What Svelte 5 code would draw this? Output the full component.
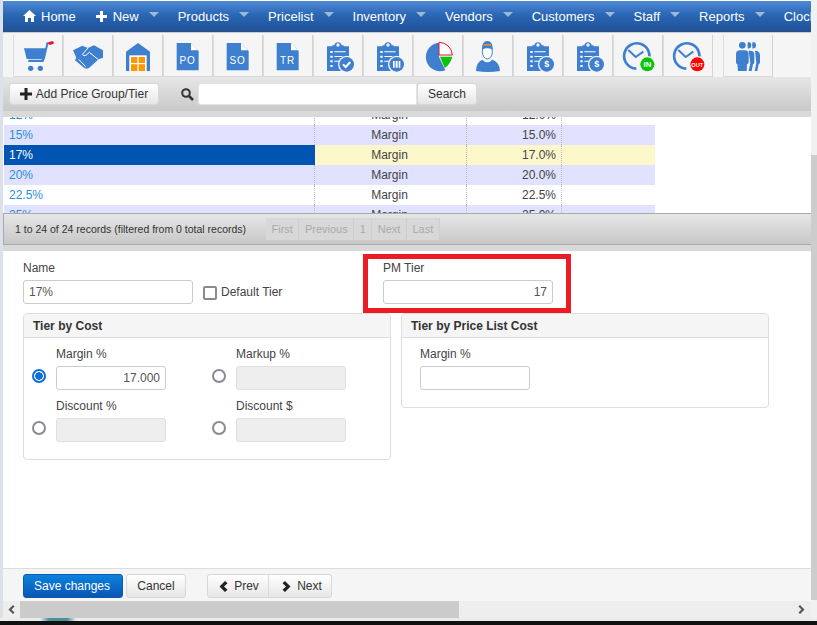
<script lang="ts">
	const nav = [
		{ label: 'Home', icon: 'home' },
		{ label: 'New', icon: 'plus', caret: true },
		{ label: 'Products', caret: true },
		{ label: 'Pricelist', caret: true },
		{ label: 'Inventory', caret: true },
		{ label: 'Vendors', caret: true },
		{ label: 'Customers', caret: true },
		{ label: 'Staff', caret: true },
		{ label: 'Reports', caret: true },
		{ label: 'Clock' }
	];

	const rows = [
		{ name: '12%', value: '12.0%' },
		{ name: '15%', value: '15.0%' },
		{ name: '17%', value: '17.0%', selected: true },
		{ name: '20%', value: '20.0%' },
		{ name: '22.5%', value: '22.5%' },
		{ name: '25%', value: '25.0%' }
	];

	const pages = ['First', 'Previous', '1', 'Next', 'Last'];
</script>

{#snippet clipboard()}
	<path class="b" d="M42 34h16v-3h6q2-9 11-9t11 9h6v3h16v74h-66z" />
	<circle cx="75" cy="30" r="5" fill="#f5f5f5" />
	<path class="w" d="M52 48h7v6h-7zM64 49h34v3h-34zM52 62h7v6h-7zM64 63h24v3h-24zM52 76h7v6h-7zM64 77h14v3h-14zM52 90h7v6h-7z" />
	<circle cx="101" cy="88" r="26" fill="#f5f5f5" />
	<circle class="b" cx="101" cy="88" r="22" />
{/snippet}

{#snippet doc(code)}
	<path class="b" d="M41 24h42l24 24v58h-66z" />
	<path fill="#fff" d="M84 25l21 21h-21z" />
	<text class="doc-text" x="74" y="88" text-anchor="middle">{code}</text>
{/snippet}

{#snippet clock(badge, code)}
	<path d="M103 84A38 38 0 1 0 70 101" fill="none" stroke="#3f7fcf" stroke-width="8" />
	<path d="M46 45L68 66L91 50" fill="none" stroke="#3f7fcf" stroke-width="6" />
	<circle cx="103" cy="88" r="25" fill="#f5f5f5" />
	<circle cx="103" cy="88" r="21" fill={badge} />
	<text class="badge-text" class:narrow={code === 'OUT'} x="103" y="96" text-anchor="middle">{code}</text>
{/snippet}

<div class="window">
	<div class="frame">
		<div class="left-strip"></div>
		<div class="main">
			<nav class="navbar">
				{#each nav as item}
					<div class="nav-item">
						{#if item.icon === 'home'}
							<svg class="nav-icon" width="13" height="12" viewBox="0 0 13 12"><path fill="#fff" d="M6.5 0L13 6h-2v6H8V8H5v4H2V6H0z" /></svg>
						{:else if item.icon === 'plus'}
							<svg class="nav-icon" width="11" height="11" viewBox="0 0 11 11"><path fill="#fff" d="M4 0h3v4h4v3H7v4H4V7H0V4h4z" /></svg>
						{/if}
						<span>{item.label}</span>
						{#if item.caret}<i class="caret"></i>{/if}
					</div>
				{/each}
			</nav>

			<div class="toolbar">
				<div class="tool">
					<svg viewBox="0 0 150 126">
						<path class="b" d="M33 40H97L101 22H107L96 70L91 81H46V74H86L87 72H41z" />
						<ellipse cx="114" cy="24" rx="9" ry="5" transform="rotate(-15 114 24)" fill="#e8112d" />
						<circle class="b" cx="53" cy="100" r="8" />
						<circle class="b" cx="82" cy="100" r="8" />
					</svg>
				</div>
				<div class="tool">
					<svg viewBox="0 0 150 126">
						<path class="b" d="M30 46L58 32L75 39L93 31L120 46V68L108 72L78 99Q70 103 63 98L36 76L40 68z" />
						<path class="wl hair" d="M75 39L58 58Q62 66 70 60L79 52L106 74M47 73L68 95" />
					</svg>
				</div>
				<div class="tool">
					<svg viewBox="0 0 150 126">
						<path class="b" d="M39 50L75 24L111 50V108H39z" />
						<rect x="49" y="61" width="52" height="47" fill="#fff" />
						<path fill="#ff9800" d="M54 66h19v18h-19zM77 66h19v18h-19zM54 88h19v20h-19zM77 88h19v20h-19z" />
					</svg>
				</div>
				<div class="tool"><svg viewBox="0 0 150 126">{@render doc('PO')}</svg></div>
				<div class="tool"><svg viewBox="0 0 150 126">{@render doc('SO')}</svg></div>
				<div class="tool"><svg viewBox="0 0 150 126">{@render doc('TR')}</svg></div>
				<div class="tool">
					<svg viewBox="0 0 150 126">
						{@render clipboard()}
						<path class="wl thick" d="M90 88l8 8l14-15" />
					</svg>
				</div>
				<div class="tool">
					<svg viewBox="0 0 150 126">
						{@render clipboard()}
						<path class="w" d="M90 78h5v20h-5zM98 78h6v20h-6zM107 78h5v20h-5z" />
					</svg>
				</div>
				<div class="tool">
					<svg viewBox="0 0 150 126">
						<path class="b" d="M78 66V23A43 43 0 1 0 97 106z" />
						<path d="M78 22V60H118A40 40 0 0 0 78 22z" fill="#fff" stroke="#e8112d" stroke-width="3" />
						<path d="M81 65H118Q112 88 95 99z" fill="#0ac40a" />
					</svg>
				</div>
				<div class="tool">
					<svg viewBox="0 0 150 126">
						<path class="b" d="M39 108Q39 83 58 74Q73 90 88 74Q111 83 111 108Q75 114 39 108z" />
						<ellipse cx="73" cy="50" rx="15" ry="22" fill="#fff" stroke="#3f7fcf" stroke-width="3" />
						<path class="b" d="M57 44Q56 18 73 18Q90 18 89 44Q73 36 57 44z" />
						<path fill="#f08a24" d="M62 27h22v5h-22z" />
					</svg>
				</div>
				<div class="tool">
					<svg viewBox="0 0 150 126">
						{@render clipboard()}
						<text class="dollar" x="101" y="97" text-anchor="middle">$</text>
					</svg>
				</div>
				<div class="tool">
					<svg viewBox="0 0 150 126">
						{@render clipboard()}
						<text class="dollar" x="101" y="97" text-anchor="middle">$</text>
					</svg>
				</div>
				<div class="tool"><svg viewBox="0 0 150 126">{@render clock('#0ac40a', 'IN')}</svg></div>
				<div class="tool"><svg viewBox="0 0 150 126">{@render clock('#f00', 'OUT')}</svg></div>
				<div class="tool tool-apart">
					<svg viewBox="0 0 150 126">
						<circle class="b" cx="58" cy="31" r="10" />
						<path class="b" d="M75 21a10 10 0 0 1 0 20q-4-10 0-20zM89 21a10 10 0 0 1 0 20q-4-10 0-20z" />
						<path class="b" d="M39 58q0-12 12-12h14q12 0 12 12v24q0 5-5 6l-1 20h-26l-2-20q-4-1-4-6z" />
						<path class="b" d="M77 47h5q12 0 12 12v22q0 5-4 7l-4 20h-9l5-24z" />
						<path class="b" d="M96 47h1q12 0 14 12v22q0 5-4 7l-4 20h-8l5-24z" />
					</svg>
				</div>
			</div>

			<div class="searchbar">
				<button class="btn add-btn">
					<svg width="12" height="12" viewBox="0 0 12 12"><path fill="#222" d="M4.5 0h3v4.5H12v3H7.500V12h-3V7.500H0v-3h4.500z" /></svg>
					Add Price Group/Tier
				</button>
				<svg class="search-icon" width="13" height="13" viewBox="0 0 13 13">
					<circle cx="5" cy="5" r="3.800" fill="none" stroke="#333" stroke-width="2" />
					<path d="M8 8l4 4" stroke="#333" stroke-width="2.500" />
				</svg>
				<input class="search-input" />
				<button class="btn search-btn">Search</button>
			</div>
			<div class="band"></div>

			<div class="table-wrap">
				<div class="table">
					{#each rows as row, i}
						<div class="row" class:odd={i % 2 === 1} class:selected={row.selected}>
							<div class="cell name">{row.name}</div>
							<div class="cell type">Margin</div>
							<div class="cell value">{row.value}</div>
							<div class="cell last"></div>
						</div>
					{/each}
				</div>
			</div>

			<div class="table-foot">
				<span class="records">1 to 24 of 24 records (filtered from 0 total records)</span>
				<div class="pager">
					{#each pages as page}
						<span class="page">{page}</span>
					{/each}
				</div>
			</div>
			<div class="band"></div>

			<div class="form">
				<div class="form-top">
					<div class="field name-field">
						<label for="tier-name">Name</label>
						<input id="tier-name" value="17%" />
					</div>
					<div class="default-tier">
						<span class="checkbox"></span>
						<span>Default Tier</span>
					</div>
					<div class="field pm-box">
						<label for="pm-tier">PM Tier</label>
						<input id="pm-tier" class="num" value="17" />
					</div>
				</div>

				<div class="panels">
					<section class="panel">
						<h3>Tier by Cost</h3>
						<div class="options">
							<div class="option">
								<span class="opt-label">Margin %</span>
								<span class="radio on"></span>
								<input class="num" value="17.000" />
							</div>
							<div class="option">
								<span class="opt-label">Markup %</span>
								<span class="radio"></span>
								<input disabled />
							</div>
							<div class="option">
								<span class="opt-label">Discount %</span>
								<span class="radio"></span>
								<input disabled />
							</div>
							<div class="option">
								<span class="opt-label">Discount $</span>
								<span class="radio"></span>
								<input disabled />
							</div>
						</div>
					</section>
					<section class="panel">
						<h3>Tier by Price List Cost</h3>
						<div class="single">
							<span class="opt-label">Margin %</span>
							<input />
						</div>
					</section>
				</div>
			</div>

			<div class="actions">
				<button class="btn primary">Save changes</button>
				<button class="btn cancel">Cancel</button>
				<div class="btn-group">
					<button class="btn prev">
						<svg width="9" height="11" viewBox="0 0 9 11"><path fill="#222" d="M6 0L8.500 2.200L5 5.500L8.500 8.800L6 11L0.500 5.500z" /></svg>
						Prev
					</button>
					<button class="btn next">
						<svg width="9" height="11" viewBox="0 0 9 11"><path fill="#222" d="M3 0L0.500 2.200L4 5.500L0.500 8.800L3 11L8.500 5.500z" /></svg>
						Next
					</button>
				</div>
			</div>

			<div class="hscroll">
				<svg width="7" height="9" viewBox="0 0 7 9"><path fill="#555" d="M5 0L6.500 1.500L3.500 4.500L6.500 7.500L5 9L0.500 4.500z" /></svg>
				<div class="thumb"></div>
				<svg class="right-arrow" width="7" height="9" viewBox="0 0 7 9"><path fill="#555" d="M2 0L0.500 1.500L3.500 4.500L0.500 7.500L2 9L6.500 4.500z" /></svg>
			</div>
		</div>
		<div class="vscroll"><div class="vthumb"></div></div>
	</div>
	<div class="edge">
		<div class="smudge"></div>
		<div class="black"></div>
	</div>
</div>

<style>
	:global(body) {
		margin: 0;
		background: #fff;
	}

	.window {
		width: 817px;
		height: 625px;
		overflow: hidden;
		display: flex;
		flex-direction: column;
		font-family: 'Liberation Sans', Arial, sans-serif;
		font-size: 12px;
		color: #444;
	}

	.frame {
		display: flex;
		height: 618px;
	}

	.left-strip {
		width: 3px;
		background: #dbe0ea;
	}

	.main {
		width: 808px;
		display: flex;
		flex-direction: column;
		background: #fff;
	}

	.vscroll {
		width: 6px;
		background: #f1f1f1;
		padding-top: 155px;
	}

	.vthumb {
		height: 445px;
		background: #cdcdcd;
	}

	.navbar {
		display: flex;
		height: 30px;
		margin-top: 1px;
		padding-left: 20px;
		align-items: center;
		overflow: hidden;
		white-space: nowrap;
		background: linear-gradient(#4f8ad6, #2a67b5 45%, #1f5299);
		border-bottom: 1px solid #2c4f80;
		color: #fff;
	}

	.nav-item {
		display: flex;
		align-items: center;
		margin-right: 19px;
		flex-shrink: 0;
		font-size: 13px;
	}

	.nav-item:first-child {
		margin-right: 20px;
	}

	.nav-icon {
		margin: 0 5px 0 0;
	}

	.nav-item:nth-child(2) .nav-icon {
		margin-right: 6px;
	}

	.caret {
		width: 0;
		height: 0;
		margin: -3px 0 0 10px;
		border-left: 5px solid transparent;
		border-right: 5px solid transparent;
		border-top: 5px solid #9db7da;
	}

	.toolbar {
		display: flex;
		height: 45px;
		box-sizing: border-box;
		padding: 2px 0 1px 10px;
		border-top: 1px solid #c6ccd4;
		background: #f5f5f5;
	}

	.tool {
		width: 50px;
		height: 42px;
		box-sizing: border-box;
		border-left: 1px solid #dcdcdc;
		border-right: 1px solid #d4d4d4;
		border-bottom: 1px solid #d8d8d8;
		margin-right: 0;
		position: relative;
	}

	.tool svg {
		display: block;
		width: 50px;
		height: 42px;
		margin-left: -1px;
	}

	.tool-apart {
		margin-left: 10px;
	}

	.b {
		fill: #3f7fcf;
	}

	.w {
		fill: #fff;
	}

	.wl {
		fill: none;
		stroke: #fff;
		stroke-width: 4;
	}

	.hair {
		stroke-width: 3;
	}

	.thick {
		stroke-width: 6;
	}

	.doc-text {
		fill: #fff;
		font-size: 30px;
		letter-spacing: 3px;
	}

	.badge-text {
		fill: #fff;
		font-size: 23px;
		font-weight: bold;
	}

	.badge-text.narrow {
		font-size: 17px;
		y: 94px;
	}

	.dollar {
		fill: #fff;
		font-size: 27px;
		font-weight: bold;
	}

	.searchbar {
		display: flex;
		align-items: center;
		height: 34px;
		padding-left: 6px;
		background: linear-gradient(#e6e6e6, #c9c9c9);
	}

	.band {
		height: 6px;
		background: #d9d9d9;
	}

	.btn {
		height: 24px;
		box-sizing: border-box;
		padding: 0;
		border: 1px solid #d8d8d8;
		border-radius: 3px;
		background: linear-gradient(#fff, #e6e6e6);
		font-family: inherit;
		font-size: 12px;
		color: #333;
	}

	.add-btn {
		width: 150px;
		height: 22px;
		display: flex;
		align-items: center;
		justify-content: center;
		gap: 4px;
	}

	.search-icon {
		margin-left: 22px;
	}

	.search-input {
		width: 219px;
		height: 22px;
		margin-left: 4px;
		border-color: #e4e4e4;
		border-radius: 3px 0 0 3px;
	}

	.search-btn {
		width: 60px;
		height: 22px;
	}

	.table-wrap {
		height: 96px;
		overflow: hidden;
		padding-left: 1px;
	}

	.table {
		margin-top: -12px;
		width: 651px;
	}

	.row {
		display: grid;
		grid-template-columns: 311px 152px 95px 93px;
		height: 20px;
		line-height: 20px;
		background: #fff;
	}

	.row.odd {
		background: #e0e2ff;
	}

	.row.selected {
		background: #fdf8cb;
	}

	.cell {
		box-sizing: border-box;
		border-right: 1px dotted #bbb;
	}

	.cell.last {
		border-right: 0;
	}

	.name {
		padding-left: 5px;
		color: #2a8fd6;
	}

	.selected .name {
		background: #0055b3;
		color: #fff;
		border-right: 0;
	}

	.type {
		text-align: center;
		padding-right: 2px;
	}

	.value {
		text-align: right;
		padding-right: 5px;
	}

	.table-foot {
		display: flex;
		align-items: center;
		height: 32px;
		box-sizing: border-box;
		padding-left: 11px;
		background: linear-gradient(#e6e6e6, #c8c8c8);
		border: 1px solid #aaa;
		border-right: 0;
	}

	.records {
		width: 251px;
		flex-shrink: 0;
		font-size: 10.500px;
		white-space: nowrap;
		color: #333;
	}

	.pager {
		display: flex;
	}

	.page {
		height: 22px;
		line-height: 22px;
		padding: 0 5.500px;
		background: #d8d8d8;
		border-right: 1px solid #cfcfcf;
		color: #aaa;
		font-size: 11px;
	}

	.form {
		flex: 1;
		padding: 3px 0 0 20px;
	}

	.form-top {
		display: flex;
		height: 59px;
	}

	label,
	.opt-label {
		display: block;
		height: 14px;
		line-height: 14px;
		margin-bottom: 5px;
	}

	input {
		display: block;
		box-sizing: border-box;
		width: 100%;
		height: 24px;
		padding: 0 5px;
		border: 1px solid #ccc;
		border-radius: 3px;
		background: #fff;
		font-family: inherit;
		font-size: 12px;
		color: #555;
		outline: none;
	}

	input:disabled {
		background: #eee;
		border-color: #e0e0e0;
	}

	.num {
		text-align: right;
	}

	.name-field {
		width: 170px;
		padding-top: 7px;
	}

	.default-tier {
		width: 170px;
		display: flex;
		align-items: center;
		gap: 4px;
		height: 14px;
		margin-top: 31px;
		padding-left: 10px;
		box-sizing: border-box;
	}

	.checkbox {
		width: 14px;
		height: 14px;
		box-sizing: border-box;
		margin-top: 2px;
		border: 2px solid #8a8a96;
		border-radius: 2px;
	}

	.pm-box {
		width: 208px;
		height: 59px;
		box-sizing: border-box;
		padding: 2px 13px 0 15px;
		border: 5px solid #ed1c24;
	}

	.panels {
		display: flex;
		align-items: flex-start;
		gap: 10px;
	}

	.panel {
		width: 368px;
		box-sizing: border-box;
		border: 1px solid #ddd;
		border-radius: 4px;
	}

	h3 {
		margin: 0;
		height: 24px;
		line-height: 24px;
		box-sizing: border-box;
		padding-left: 9px;
		background: #f5f5f5;
		border-bottom: 1px solid #ddd;
		border-radius: 3px 3px 0 0;
		font-size: 12px;
		font-weight: bold;
		color: #333;
	}

	.options {
		display: grid;
		grid-template-columns: 180px 180px;
		row-gap: 9px;
		padding: 9px 0 17px 8px;
	}

	.option {
		display: grid;
		grid-template-columns: 14px 110px;
		column-gap: 10px;
	}

	.option .opt-label {
		grid-column: 2;
	}

	.radio {
		width: 14px;
		height: 14px;
		box-sizing: border-box;
		align-self: center;
		margin-top: -4px;
		border: 2px solid #8a8a96;
		border-radius: 50%;
		background: #fff;
	}

	.radio.on {
		border-color: #0b6fd8;
		background: radial-gradient(circle, #0b6fd8 0 3.500px, #fff 4px);
	}

	.single {
		width: 110px;
		padding: 9px 0 17px 18px;
	}

	.actions {
		display: flex;
		height: 33px;
		box-sizing: border-box;
		padding: 5px 0 0 20px;
		background: #f5f5f5;
		border-top: 1px solid #ddd;
	}

	.primary {
		width: 100px;
		padding-right: 2px;
		border-color: #0a5cb0;
		background: linear-gradient(#0a83dc, #0a55b5);
		color: #fff;
	}

	.cancel {
		width: 60px;
		margin-left: 3px;
	}

	.btn-group {
		display: flex;
		margin-left: 21px;
	}

	.prev,
	.next {
		display: flex;
		align-items: center;
		justify-content: center;
		gap: 6px;
	}

	.prev {
		width: 62px;
		padding-left: 2px;
		border-radius: 3px 0 0 3px;
	}

	.next {
		width: 64px;
		padding-left: 4px;
		margin-left: -1px;
		border-radius: 0 3px 3px 0;
	}

	.hscroll {
		display: flex;
		align-items: center;
		height: 17px;
		padding-left: 5px;
		background: #eee;
	}

	.thumb {
		width: 439px;
		height: 17px;
		margin-left: 5px;
		background: #cbcbcb;
	}

	.right-arrow {
		margin-left: 339px;
	}

	.edge {
		position: relative;
		flex: 1;
		background: #ececec;
	}

	.smudge {
		position: absolute;
		left: 40px;
		top: 0;
		width: 36px;
		height: 3px;
		background: linear-gradient(90deg, #ececec, #4a919c 25%, #4a919c 75%, #ececec);
	}

	.black {
		position: absolute;
		left: 0;
		right: 0;
		bottom: 0;
		height: 4px;
		background: #111;
	}
</style>
